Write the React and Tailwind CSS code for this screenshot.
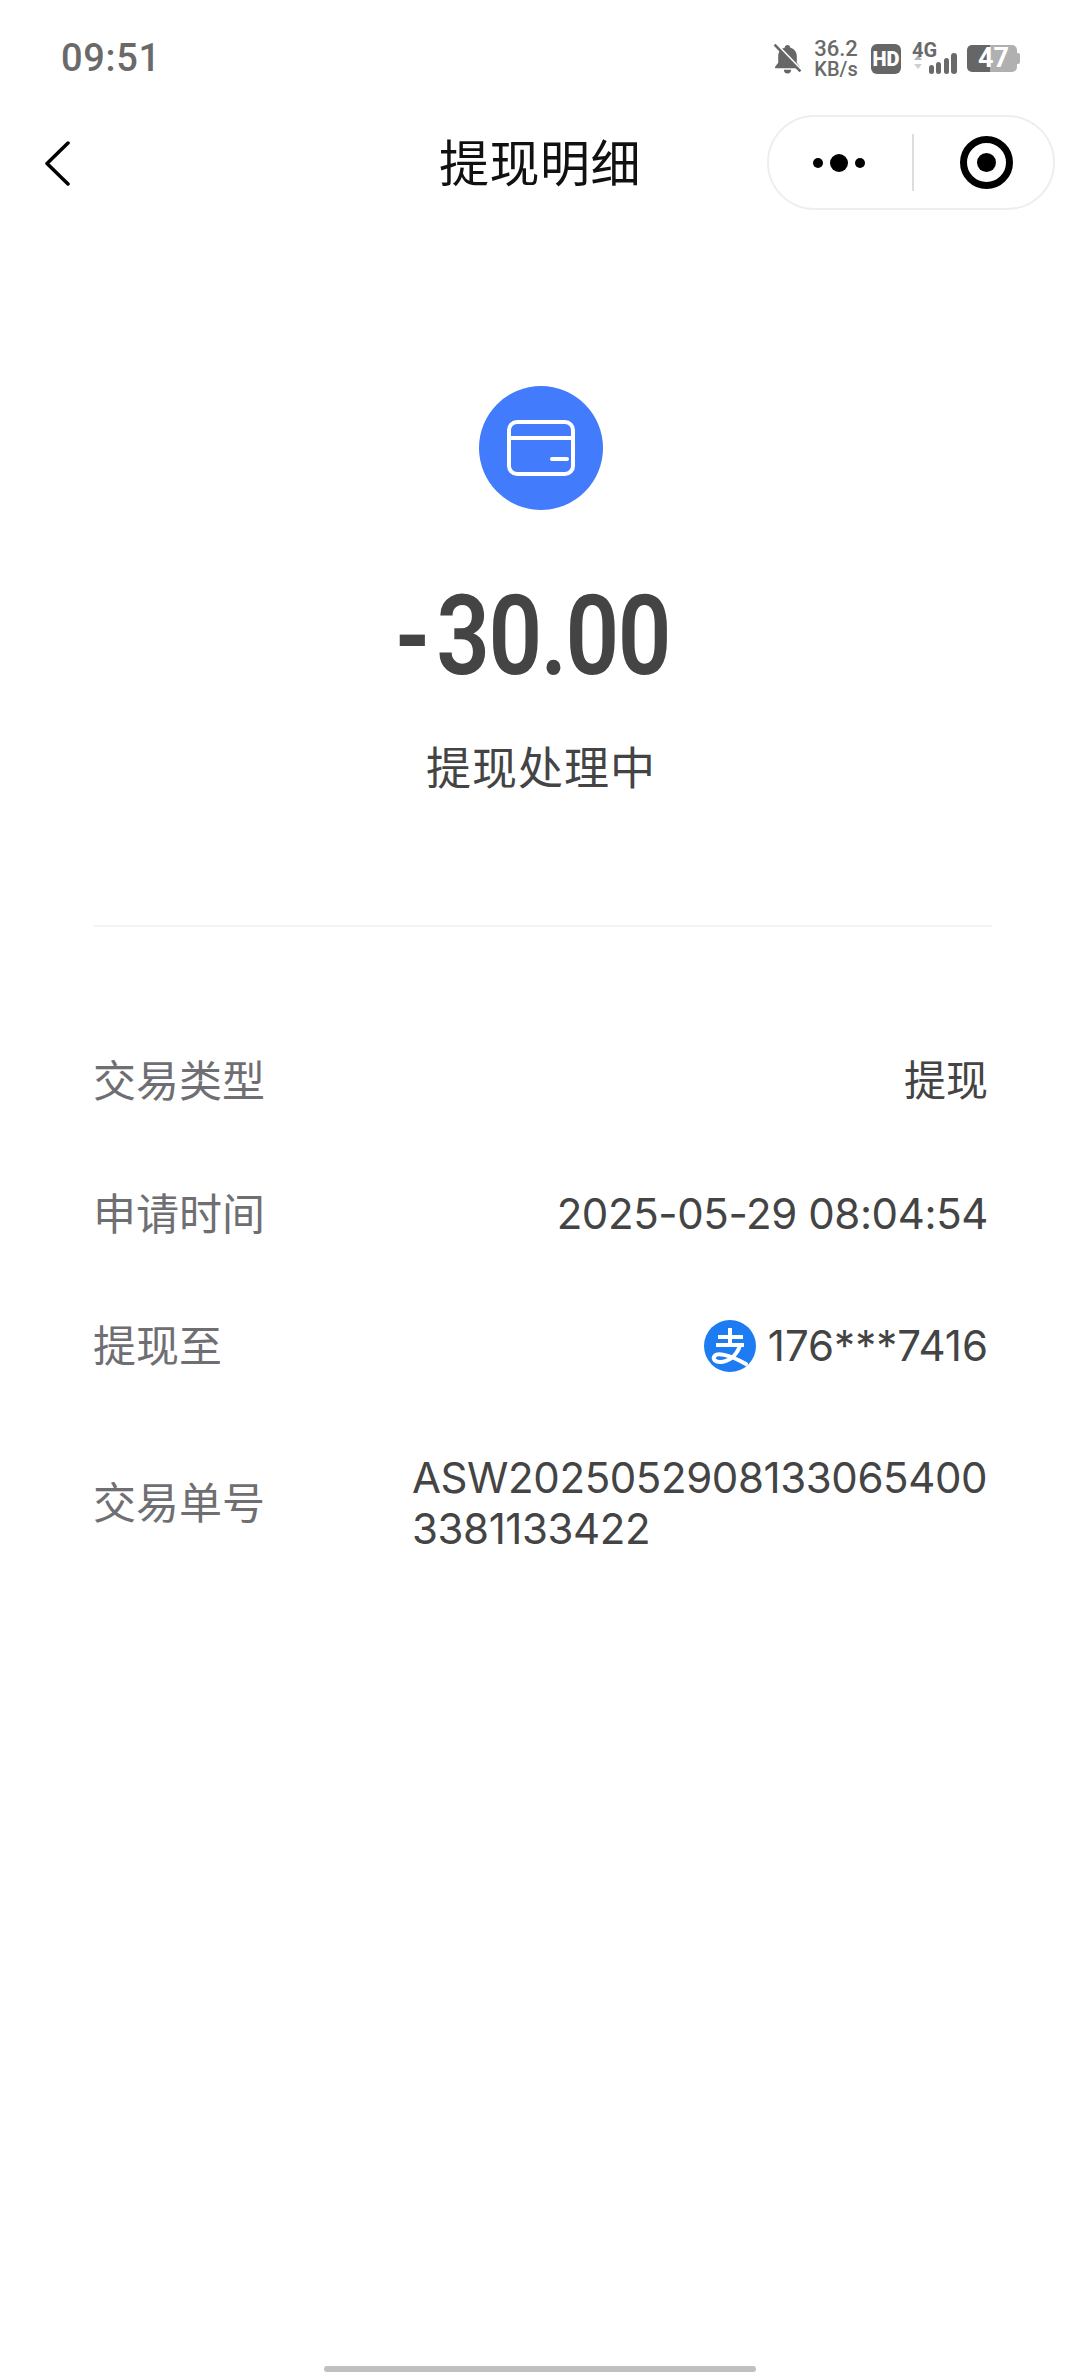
const Row = ({ label, children, className = "" }) => (
  <div className={`flex items-center justify-between ${className}`}>
    <span className="text-[43px] leading-[60px] text-[#6f6f73]">{label}</span>
    {children}
  </div>
);

const BellOff = () => (
  <svg width="29" height="31" viewBox="0 0 28 30">
    <path d="M14 2c-1.500 0-2.500 1-2.800 2.500C7 5.600 5 9 5 13v6l-3 4v1.500h24V23l-3-4v-6c0-4-2-7.400-6.200-8.500C16.500 3 15.500 2 14 2z" fill="#666" />
    <path d="M10.500 26h7a3.500 3.500 0 0 1-7 0z" fill="#666" />
    <path d="M3 1l25 26" stroke="#fff" strokeWidth="2.500" />
    <path d="M1.500 1.500l25 26" stroke="#666" strokeWidth="2.500" />
  </svg>
);

const Signal = () => (
  <svg width="46" height="32" viewBox="0 0 46 32">
    <path d="M2 17l4-5 4 5z" fill="#b5b5b5" />
    <path d="M2 21l4 5 4-5z" fill="#d0d0d0" />
    <rect x="17" y="22" width="5" height="9" rx="2.500" fill="#6a6a6a" />
    <rect x="24" y="19" width="5" height="12" rx="2.500" fill="#6a6a6a" />
    <rect x="32" y="15" width="5" height="16" rx="2.500" fill="#6a6a6a" />
    <rect x="39" y="10" width="6" height="21" rx="3" fill="#6a6a6a" />
  </svg>
);

const AlipayIcon = () => (
  <svg width="52" height="52" viewBox="0 0 52 52" className="shrink-0">
    <circle cx="26" cy="26" r="26" fill="#1d7cf2" />
    <g fill="none" stroke="#fff" strokeWidth="4">
      <path d="M14 17h25" />
      <path d="M26 8v16" />
      <path d="M12 25h28" />
      <path d="M36 25c-3 11-12 17-20 17-5 0-7-3-6-5 2-5 14-3 32 7" strokeLinecap="round" />
    </g>
  </svg>
);

export default function App() {
  return (
    <div className="w-[1080px] h-[2376px] bg-white flex flex-col font-['Inter','Noto_Sans_CJK_SC',sans-serif] overflow-hidden">
      {/* status bar */}
      <div className="h-[115px] shrink-0 flex items-center justify-between pl-[61px] pr-[60px] pt-[2px]">
        <span className="font-['Roboto',sans-serif] text-[38px] font-medium text-[#6a6a6a] tracking-[0.7px]">09:51</span>
        <div className="flex items-center text-[#6a6a6a]">
          <BellOff />
          <div className="ml-[10px] w-[48px] flex flex-col items-center font-['Roboto',sans-serif] font-medium leading-[20px]">
            <span className="text-[22px]">36.2</span>
            <span className="text-[20px]">KB/s</span>
          </div>
          <div className="ml-[11px] w-[30px] h-[30px] rounded-[6px] bg-[#666] flex items-center justify-center font-['Roboto',sans-serif] text-[20px] font-black text-white">HD</div>
          <div className="ml-[11px] w-[46px] h-[32px] relative">
            <Signal />
            <span className="absolute left-0 top-[-3px] font-['Roboto',sans-serif] text-[20px] leading-[20px] font-bold">4G</span>
          </div>
          <div className="ml-[9px] relative w-[53px] h-[27px] flex items-center">
            <div className="w-[23px] h-[27px] rounded-l-[5px] bg-[#666]" />
            <div className="w-[27px] h-[27px] rounded-r-[5px] bg-[#b0b0b0]" />
            <div className="w-[3px] h-[11px] rounded-r-[2px] bg-[#b0b0b0]" />
            <span className="absolute left-[11px] top-0 font-['Roboto',sans-serif] text-[27px] leading-[27px] font-bold text-white">47</span>
          </div>
        </div>
      </div>

      {/* nav */}
      <div className="h-[95px] shrink-0 grid grid-cols-[1fr_auto_1fr] items-center">
        <div className="pl-[44px] pt-[2px]">
          <svg width="26" height="45" viewBox="0 0 26 45" className="block">
            <path d="M24 2L3 22.500 24 43" fill="none" stroke="#000" strokeWidth="3.500" strokeLinecap="round" strokeLinejoin="round" />
          </svg>
        </div>
        <h1 className="text-[50px] leading-[60px] pt-[2px] font-normal text-[#111] tracking-[0.5px]">提现明细</h1>
        <div className="flex justify-end pr-[25px]">
          <div className="w-[288px] h-[95px] rounded-full border-2 border-[#eeeeee] flex items-center">
            <div className="w-[143px] flex items-center justify-center gap-[7px] pr-[4px]">
              <span className="w-[10px] h-[10px] rounded-full bg-black" />
              <span className="w-[18px] h-[18px] rounded-full bg-black" />
              <span className="w-[10px] h-[10px] rounded-full bg-black" />
            </div>
            <div className="w-[2px] h-[57px] bg-[#dddddd]" />
            <div className="flex-1 flex items-center justify-center pl-[6px]">
              <div className="w-[53px] h-[53px] rounded-full border-[7px] border-black flex items-center justify-center">
                <span className="w-[19px] h-[19px] rounded-full bg-black" />
              </div>
            </div>
          </div>
        </div>
      </div>

      {/* amount */}
      <div className="flex flex-col items-center pl-[2px]">
        <div className="mt-[176px] w-[124px] h-[124px] rounded-full bg-[#437bfd] flex items-center justify-center">
          <svg width="68" height="56" viewBox="0 0 68 56">
            <rect x="2" y="2" width="64" height="52" rx="8" fill="none" stroke="#fff" strokeWidth="4" />
            <path d="M2 18h64" stroke="#fff" strokeWidth="4" />
            <path d="M45 39h15" stroke="#fff" strokeWidth="4" strokeLinecap="round" />
          </svg>
        </div>
        <div className="mt-[66px] h-[120px] text-[112px] leading-[120px] font-['Roboto',sans-serif] font-semibold text-[#444] scale-x-[0.84] tracking-[-2px] mr-[18px]">
          <span className="tracking-[8px]">-</span>30.00
        </div>
        <div className="mt-[43px] text-[45px] leading-[60px] text-[#444] tracking-[1px]">提现处理中</div>
      </div>

      <div className="mt-[126px] ml-[94px] mr-[88px] h-[2px] bg-[#f3f3f3]" />

      {/* details */}
      <div className="mt-[124px] pl-[93px] pr-[92px] flex flex-col gap-[72.5px]">
        <Row label="交易类型">
          <span className="text-[42px] leading-[60px] text-[#444]">提现</span>
        </Row>
        <Row label="申请时间">
          <span className="text-[42px] leading-[60px] text-[#444] tracking-[-0.4px]">2025-05-29 08:04:54</span>
        </Row>
        <Row label="提现至">
          <div className="flex items-center gap-[12px]">
            <AlipayIcon />
            <span className="text-[42px] leading-[60px] text-[#444]">176***7416</span>
          </div>
        </Row>
        <Row label="交易单号" className="mt-[3px]">
          <span className="w-[576px] break-all text-[42px] leading-[51px] text-[#444] tracking-[-0.4px]">ASW20250529081330654003381133422</span>
        </Row>
      </div>

      {/* home indicator */}
      <div className="mt-auto mb-[4px] mx-auto w-[432px] h-[6px] rounded-full bg-[#c0c0c0]" />
    </div>
  );
}
